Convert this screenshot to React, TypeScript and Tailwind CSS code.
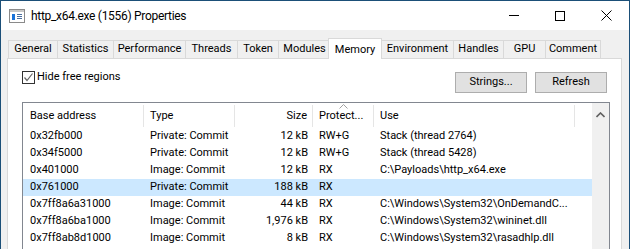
import React from "react";

const tabs = [
  { label: "General", w: 50 },
  { label: "Statistics", w: 57 },
  { label: "Performance", w: 73 },
  { label: "Threads", w: 53 },
  { label: "Token", w: 42 },
  { label: "Modules", w: 53 },
  { label: "Memory", w: 50, active: true },
  { label: "Environment", w: 73 },
  { label: "Handles", w: 51 },
  { label: "GPU", w: 43 },
  { label: "Comment", w: 56 },
];

const rows = [
  ["0x32fb000", "Private: Commit", "12 kB", "RW+G", "Stack (thread 2764)"],
  ["0x34f5000", "Private: Commit", "12 kB", "RW+G", "Stack (thread 5428)"],
  ["0x401000", "Image: Commit", "12 kB", "RX", "C:\\Payloads\\http_x64.exe"],
  ["0x761000", "Private: Commit", "188 kB", "RX", ""],
  ["0x7ff8a6a31000", "Image: Commit", "44 kB", "RX", "C:\\Windows\\System32\\OnDemandC..."],
  ["0x7ff8a6ba1000", "Image: Commit", "1,976 kB", "RX", "C:\\Windows\\System32\\wininet.dll"],
  ["0x7ff8ab8d1000", "Image: Commit", "8 kB", "RX", "C:\\Windows\\System32\\rasadhlp.dll"],
];

const cols = "grid grid-cols-[121px_91px_78px_61px_201px_1fr]";

const App = () => {
  return (
    <div className="w-[630px] h-[249px] overflow-hidden border border-[#1b4f78] border-b-0 bg-white flex flex-col font-['Roboto',sans-serif] text-[11px] text-black">
      {/* Title bar */}
      <div className="h-[29px] flex items-center shrink-0">
        <svg className="ml-[8px]" width="16" height="14" viewBox="0 0 16 14">
          <rect x="0.5" y="0.5" width="15" height="13" fill="#fff" stroke="#8a8a8a" />
          <rect x="1" y="1" width="14" height="2" fill="#c8c8c8" />
          <rect x="3" y="5" width="3" height="6" fill="#1a73d9" />
          <rect x="8" y="5" width="5" height="1" fill="#4a6fa0" />
          <rect x="8" y="7" width="5" height="1" fill="#4a6fa0" />
          <rect x="8" y="9" width="5" height="1" fill="#4a6fa0" />
        </svg>
        <span className="ml-[6px] text-[12px] tracking-[-0.3px] text-black">
          http_x64.exe (1556) Properties
        </span>
        <div className="ml-auto flex h-full">
          <div className="w-[46px] flex items-center justify-center">
            <div className="w-[10px] h-px bg-black" />
          </div>
          <div className="w-[46px] flex items-center justify-center">
            <div className="w-[10px] h-[10px] border border-black" />
          </div>
          <div className="w-[46px] flex items-center justify-center">
            <svg width="11" height="11" viewBox="0 0 11 11">
              <path d="M0.5 0.5 L10.5 10.5 M10.5 0.5 L0.5 10.5" stroke="#000" strokeWidth="1" />
            </svg>
          </div>
        </div>
      </div>

      {/* Body */}
      <div className="flex-1 bg-[#f0f0f0] pt-[8px] pl-[6px] pr-[7px] flex flex-col">
        {/* Tabs */}
        <div className="h-[20px] flex items-end pl-px">
          {tabs.map((t) =>
            t.active ? (
              <div
                key={t.label}
                style={{ width: t.w + 4 }}
                className="relative z-10 -mx-[2px] -mr-[1px] h-[21px] -mb-px bg-white border border-b-0 border-[#d9d9d9] flex items-start justify-center pt-[3px]"
              >
                {t.label}
              </div>
            ) : (
              <div
                key={t.label}
                style={{ width: t.w }}
                className="h-[18px] -mr-px border border-b-0 border-[#d9d9d9] bg-[#f0f0f0] flex items-center justify-center"
              >
                {t.label}
              </div>
            )
          )}
        </div>

        {/* Panel */}
        <div className="flex-1 bg-white border border-[#d9d9d9] border-b-0 pt-[11px] pl-[14px] pr-[11px]">
          <div className="w-[588px] flex items-start">
            <label className="flex items-center h-[14px]">
              <span className="w-[13px] h-[13px] border border-[#333] bg-white flex items-center justify-center">
                <svg width="11" height="11" viewBox="0 0 11 11">
                  <path d="M1.5 5.5 L4 8.5 L9.5 1.5" fill="none" stroke="#666" strokeWidth="1.2" />
                </svg>
              </span>
              <span className="ml-[2px]">Hide free regions</span>
            </label>
            <div className="ml-auto mr-[3px] mt-[2px] flex gap-[8px]">
              <button className="w-[72px] h-[21px] bg-[#e1e1e1] border border-[#adadad] text-[11px]">
                Strings...
              </button>
              <button className="w-[72px] h-[21px] bg-[#e1e1e1] border border-[#adadad] text-[11px]">
                Refresh
              </button>
            </div>
          </div>

          {/* List view */}
          <div className="mt-[9px] w-[588px] h-[200px] border border-[#828790] flex overflow-hidden">
            <div className="flex-1 flex flex-col">
              <div className={`${cols} h-[25px] items-start`}>
                <div className="pl-[7px] h-[22px] mt-[2px] flex items-center border-r border-[#e5e5e5]">Base address</div>
                <div className="pl-[6px] h-[22px] mt-[2px] flex items-center border-r border-[#e5e5e5]">Type</div>
                <div className="pr-[5px] h-[22px] mt-[2px] flex items-center justify-end border-r border-[#e5e5e5]">Size</div>
                <div className="relative pl-[6px] h-[22px] mt-[2px] flex items-center border-r border-[#e5e5e5]">
                  Protect...
                  <svg className="absolute left-[26px] -top-[1px]" width="9" height="5" viewBox="0 0 9 5">
                    <path d="M0.5 4.5 L4.5 0.5 L8.5 4.5" fill="none" stroke="#a0a0a0" strokeWidth="1" />
                  </svg>
                </div>
                <div className="pl-[6px] h-[22px] mt-[2px] flex items-center border-r border-[#e5e5e5]">Use</div>
                <div />
              </div>
              {rows.map((r, i) => (
                <div
                  key={i}
                  className={`${cols} h-[17px] items-center ${i === 3 ? "bg-[#cce8ff]" : ""}`}
                >
                  <div className="pl-[7px] whitespace-nowrap">{r[0]}</div>
                  <div className="pl-[6px] whitespace-nowrap">{r[1]}</div>
                  <div className="pr-[5px] text-right whitespace-nowrap">{r[2]}</div>
                  <div className="pl-[6px] whitespace-nowrap">{r[3]}</div>
                  <div className="pl-[6px] whitespace-nowrap overflow-hidden">{r[4]}</div>
                  <div />
                </div>
              ))}
            </div>
            {/* Scrollbar */}
            <div className="w-[17px] bg-[#f0f0f0] flex justify-center pt-[9px]">
              <svg width="9" height="6" viewBox="0 0 9 6">
                <path d="M0.5 5 L4.5 1 L8.5 5" fill="none" stroke="#606060" strokeWidth="1.6" />
              </svg>
            </div>
          </div>
        </div>
      </div>
    </div>
  );
};

export default App;
